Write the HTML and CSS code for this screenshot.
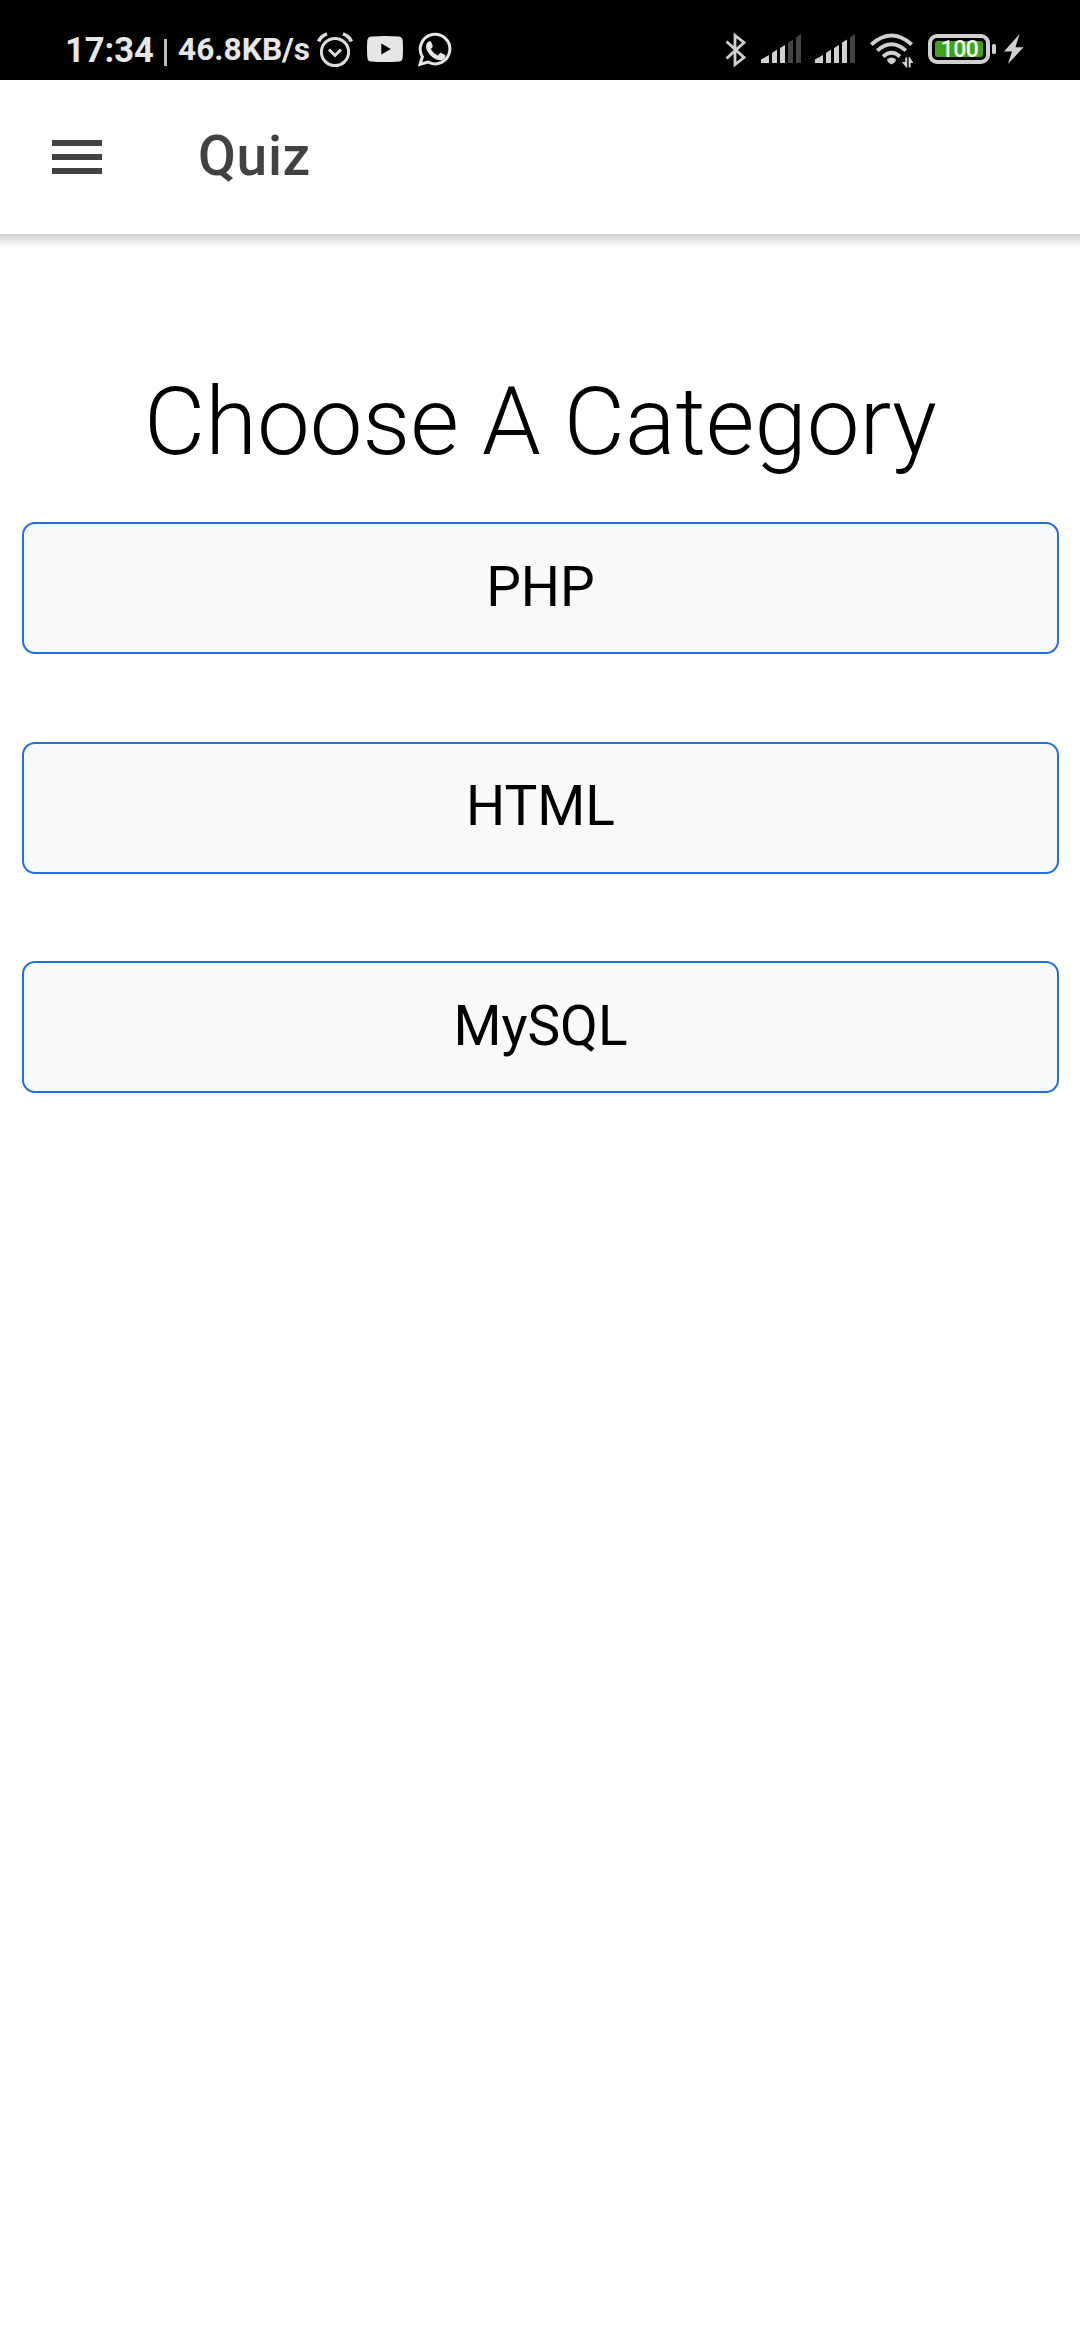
FILE: index.html
```html
<!DOCTYPE html>
<html lang="en">
<head>
<meta charset="utf-8">
<title>Quiz</title>
<link rel="stylesheet" href="styles.css">
</head>
<body>
<div class="status">
  <div class="status-group">
    <span class="clock">17:34</span>
    <span class="divider"></span>
    <span class="speed">46.8KB/s</span>
  </div>
  <div class="status-group notices">
    <svg width="36" height="36" viewBox="0 0 36 36" fill="none" stroke="#dcdcdc"><circle cx="18" cy="20" r="13.6" stroke-width="3"/><path d="M12 17.5l6 6 6-6" stroke-width="3"/><path d="M1.6 9.5Q4 4 10 1.9M34.4 9.5Q32 4 26 1.9" stroke-width="3.6"/></svg>
    <svg width="36" height="36" viewBox="0 0 36 36"><path fill="#e6e6e6" d="M4 4.500Q18 3.500 32 4.500Q35.300 5 35.600 8Q36.400 17 35.600 26Q35.300 29.200 32 29.600Q18 30.600 4 29.600Q.7 29.200.4 26Q-.4 17 .4 8Q.7 5 4 4.500Z"/><path d="M14.300 11.500v11l9.500-5.500z" fill="#000"/></svg>
    <svg width="36" height="36" viewBox="0 0 36 36"><path d="M3.100 32.200L5.400 24.700A14.800 14.800 0 1 1 10.900 30Z" fill="none" stroke="#e6e6e6" stroke-width="3"/><path fill="#e6e6e6" d="M12.200 9.300q1.500-.2 2 .8l1.500 3.700q.2.700-.3 1.400l-1.500 1.900q2.500 4.600 7 6.400l1.900-2.200q.5-.7 1.400-.3l3.700 1.900q.8.400.5 1.700c-.7 2.700-3.600 4.300-6.800 3.500C15.700 26.700 11 21.500 9.400 16.900c-1-3.300.3-6.800 2.800-7.600z"/></svg>
  </div>
  <div class="status-group system">
    <svg width="22" height="36" viewBox="0 0 22 36" fill="none" stroke="#d0d0d0" stroke-width="2.800"><path d="M1.500 9.500L19 25.500 10 32.600V3.400L19 10.500 1.500 26.500"/></svg>
    <svg class="signal" width="40" height="36" viewBox="0 0 40 36" fill="#d0d0d0"><path d="M0 31V27.500L8 23V31zM11 31V21l5-3.500V31zM19 31V16l5-3V31z"/><path fill="#444" d="M27 31V10.500l5-3V31zM35 31V5.500L40 2V31z"/></svg>
    <svg class="signal" width="40" height="36" viewBox="0 0 40 36" fill="#d0d0d0"><path d="M0 31V27.500L8 23V31zM11 31V21l5-3.500V31zM19 31V16l5-3V31zM27 31V10.500l5-3V31z"/><path fill="#444" d="M35 31V5.500L40 2V31z"/></svg>
    <svg class="wifi" width="43" height="36" viewBox="0 0 43 36"><g fill="none" stroke="#d0d0d0" stroke-width="3.800"><path d="M1.300 12.500Q21.500-5.500 41.700 12.500M7.200 18.600Q21.500 6 35.800 18.600M13 24.500Q21.500 17 30 24.500"/></g><path fill="#d0d0d0" d="M17 27.500q4.500-3.800 9 0q0 2.500-4.500 4.900q-4.500-2.400-4.500-4.900zM31.800 30h3.400v-4.500h2V35.500h-1zM38.600 25h1l3.800 6h-2.800v4.500h-2z"/></svg>
    <svg class="battery" width="68" height="36" viewBox="0 0 68 36"><rect x="2" y="4" width="58" height="26" rx="7" fill="none" stroke="#d0d0d0" stroke-width="4"/><rect x="7" y="9" width="48" height="16" rx="2.500" fill="#43a018"/><rect x="64" y="12" width="4" height="10" rx="1.500" fill="#d0d0d0"/><text class="level" x="31.500" y="25.400" text-anchor="middle">100</text></svg>
    <svg class="bolt" width="20" height="36" viewBox="0 0 20 36"><path d="M15.500 2L0 19.500h8L4 32 19.500 15.200h-8z" fill="#d0d0d0"/></svg>
  </div>
</div>
<header class="appbar">
  <svg width="50" height="34" viewBox="0 0 50 34" fill="#424242"><path d="M0 0h50v6H0zM0 14h50v6H0zM0 28h50v6H0z"/></svg>
  <h1 class="title">Quiz</h1>
</header>
<div class="shadow"></div>
<main class="content">
  <h2 class="heading">Choose A Category</h2>
  <button class="category">PHP</button>
  <button class="category">HTML</button>
  <button class="category">MySQL</button>
</main>
</body>
</html>
```
FILE: styles.css
```css
* { box-sizing: border-box; }
body {
  margin: 0;
  min-height: 2340px;
  background: #fff;
  font-family: Roboto, "Noto Sans", sans-serif;
}
svg { display: block; flex: none; }
.status {
  display: flex;
  height: 80px;
  padding: 20px 56px 0 65px;
  align-items: center;
  background: #000;
  color: #e6e6e6;
}
.status-group { display: flex; align-items: center; white-space: nowrap; }
.clock { width: 99px; font-size: 34.500px; font-weight: 700; line-height: 40px; }
.divider { width: 3px; height: 27px; margin-top: 5px; background: #bdbdbd; }
.speed { width: 150px; margin-left: 11px; font-size: 31.700px; font-weight: 700; line-height: 40px; }
.notices { gap: 14px; margin-left: -11px; }
.system { margin-left: auto; }
.signal { margin-left: 14px; }
.wifi { margin-left: 15px; }
.battery { margin-left: 15px; }
.bolt { margin-left: 8px; }
.level { fill: #f1fff0; font-size: 23px; font-weight: 500; letter-spacing: -.4px; }
.appbar {
  display: flex;
  align-items: center;
  height: 154px;
  padding: 0 52px;
  gap: 96px;
}
.title { margin: 0; padding-bottom: 2px; color: #424242; font-size: 55px; font-weight: 500; line-height: 70px; letter-spacing: .7px; }
.shadow { height: 14px; background: linear-gradient(#d0d0d0, #e6e6e6 40%, #f7f7f7 80%, #fff); }
.content {
  display: flex;
  flex-direction: column;
  gap: 87.500px;
  padding: 118px 21px 0 22px;
}
.heading { margin: 0 0 -43.500px; text-align: center; font-size: 94.200px; font-weight: 300; line-height: 112px; }
.category {
  height: 132px;
  padding: 0 0 3px;
  border: 2px solid #216fdb;
  border-radius: 13px;
  background: #f8f9fb;
  color: #000;
  font-family: inherit;
  font-size: 55px;
  line-height: 66px;
}
```
